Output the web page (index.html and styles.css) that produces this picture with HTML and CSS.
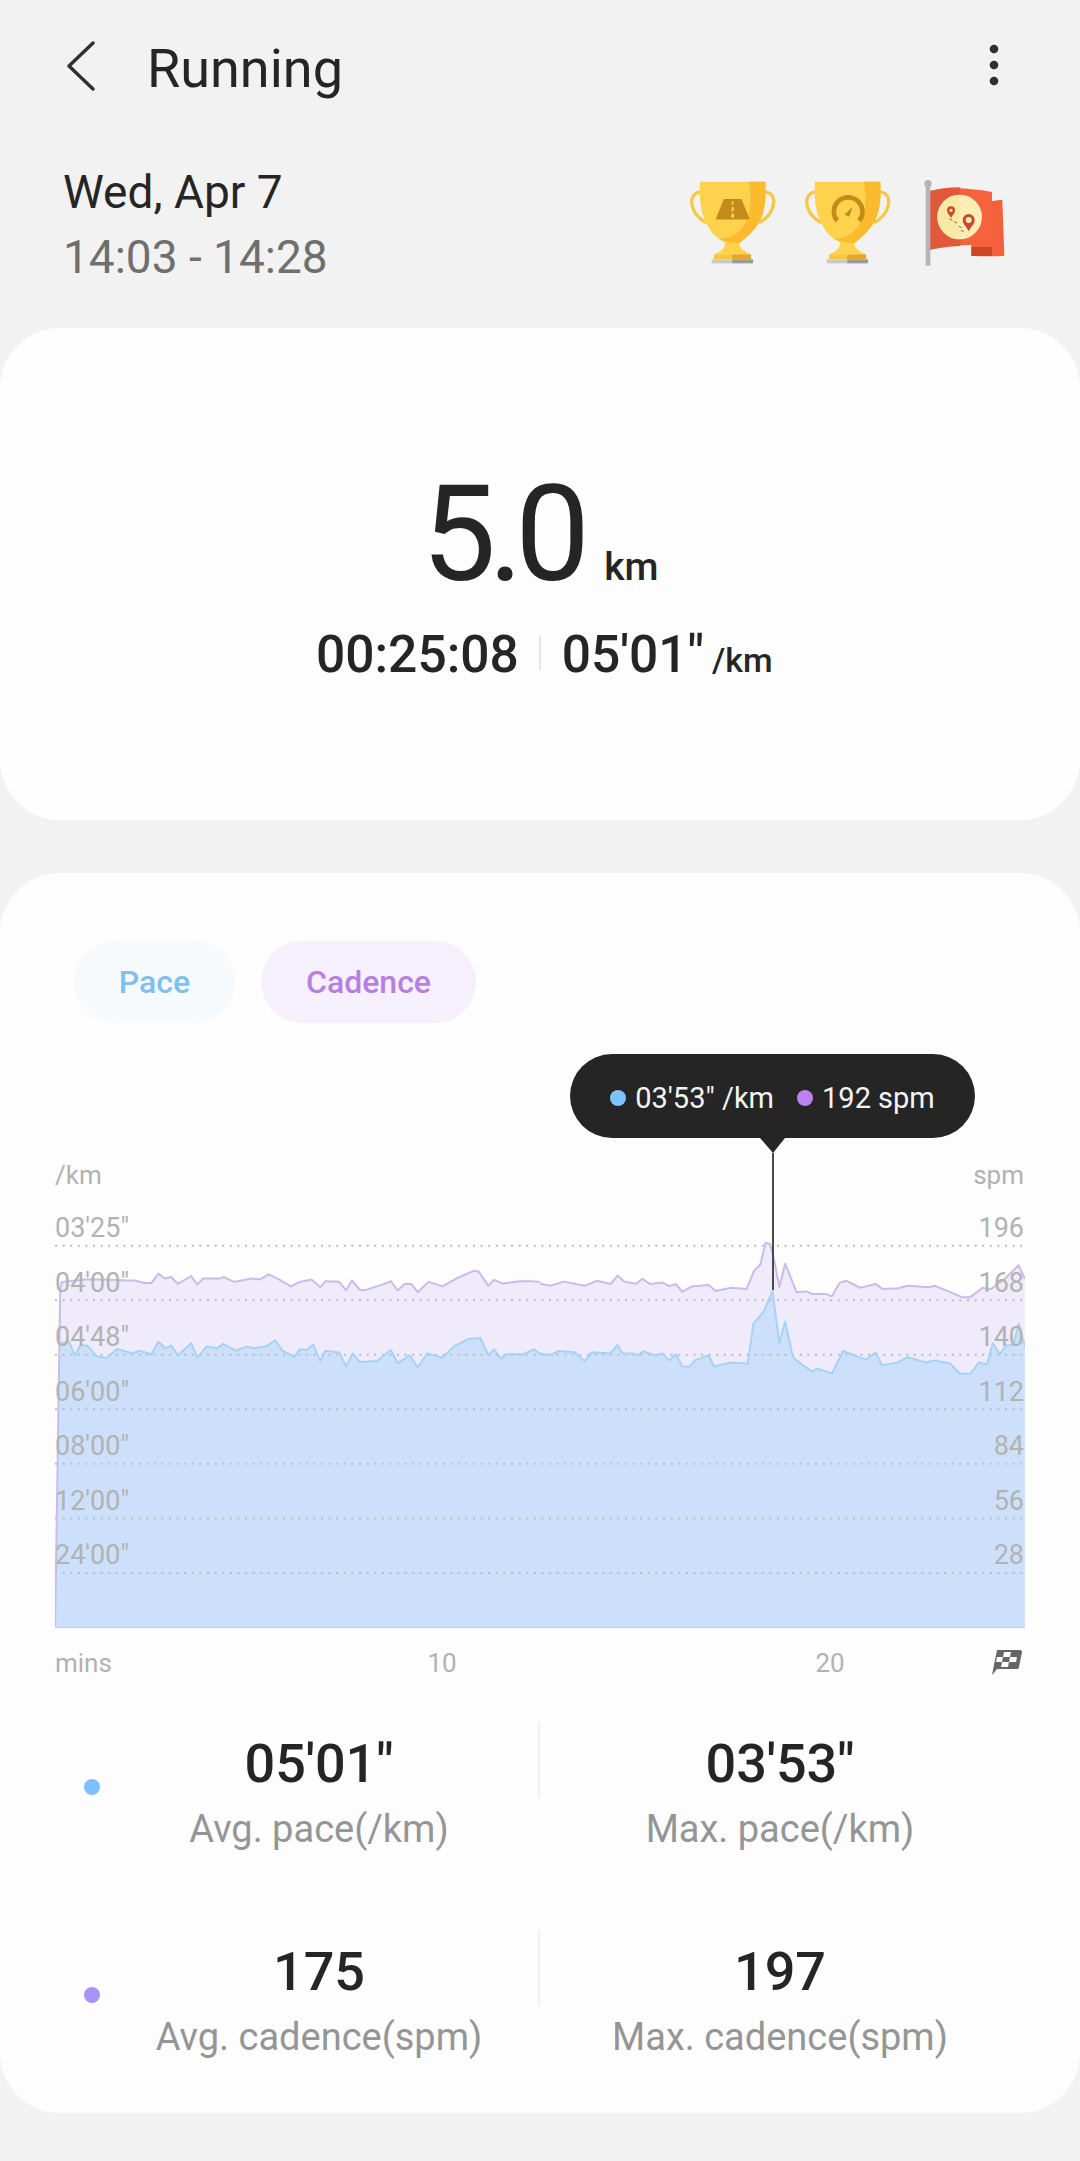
FILE: index.html
```html
<!DOCTYPE html>
<html lang="en">
<head>
<meta charset="utf-8">
<title>Running</title>
<link rel="stylesheet" href="styles.css">
</head>
<body>
<header class="appbar">
  <svg class="back" viewBox="0 0 30 50" aria-hidden="true"><path d="M27 2 3 25l24 23"/></svg>
  <h1 class="title">Running</h1>
  <svg class="menu" viewBox="0 0 12 48" aria-hidden="true"><circle cx="6" cy="8" r="4.3"/><circle cx="6" cy="24" r="4.3"/><circle cx="6" cy="40" r="4.3"/></svg>
</header>

<section class="summary">
  <div class="when">
    <div class="date">Wed, Apr 7</div>
    <div class="time">14:03 - 14:28</div>
  </div>
  <div class="badges">
    <svg class="trophy" viewBox="140 55 275 265" aria-hidden="true">
      <path class="t-handle" d="M190 97C160 95 148 115 155 140c5 22 20 38 42 50M365 97c30-2 40 18 33 43-5 22-20 38-42 50"/>
      <path class="t-cup" d="M178 66H375C378 130 372 170 345 205 330 225 310 240 296 250 296 268 315 278 332 285H220C238 278 254 268 254 250 235 240 215 225 205 205 182 170 175 130 178 66Z"/>
      <path class="t-shade" d="M325 66H375C378 130 372 170 345 205 330 225 310 240 296 252 280 250 255 248 235 238 280 240 320 205 328 150 332 115 330 90 325 66Z"/>
      <path class="t-base" d="M220 285h55v15h-55z"/><path class="t-base-d" d="M275 285h57v15h-57z"/>
      <path class="t-foot" d="M213 300h62v12h-62z"/><path class="t-foot-d" d="M275 300h63v12h-63z"/>
      <path class="t-mark" d="M250 118h53l25 62H225z"/>
      <path class="t-dash" d="M274 124h5v12h-5zM273 142h7v13h-7zM272 162h9v13h-9z"/>
    </svg>
    <svg class="trophy" viewBox="485 55 275 265" aria-hidden="true">
      <path class="t-handle" d="M535 97c-30-2-42 18-35 43 5 22 20 38 42 50M710 97c30-2 40 18 33 43-5 22-20 38-42 50"/>
      <path class="t-cup" d="M523 66H720C723 130 717 170 690 205 675 225 655 240 641 250 641 268 660 278 677 285H565C583 278 599 268 599 250 580 240 560 225 550 205 527 170 520 130 523 66Z"/>
      <path class="t-shade" d="M670 66H720C723 130 717 170 690 205 675 225 655 240 641 252 625 250 600 248 580 238 625 240 665 205 673 150 677 115 675 90 670 66Z"/>
      <path class="t-base" d="M565 285h55v15h-55z"/><path class="t-base-d" d="M620 285h57v15h-57z"/>
      <path class="t-foot" d="M558 300h62v12h-62z"/><path class="t-foot-d" d="M620 300h63v12h-63z"/>
      <path class="t-gauge" d="M590 184a43 43 0 1 1 66 0"/>
      <path class="t-needle" d="M612 166l24-24-10 30z"/>
    </svg>
    <svg class="flag" viewBox="845 55 255 270" aria-hidden="true">
      <path class="f-back" d="M1050 125l36-5 6 168c-30 3-70 2-99 0v-30z"/>
      <path class="f-fold" d="M993 262l62 0v26c-20 2-42 1-62 0z"/>
      <path class="f-main" d="M858 97c40-12 100-18 197 0v165c-70-12-130-6-197 10z"/>
      <path class="f-left" d="M858 97c30-9 65-14 102-14v176c-35 1-68 6-102 13z"/>
      <circle class="f-disc" cx="958" cy="172" r="67"/>
      <path class="f-disc-l" d="M958 105a67 67 0 0 0 0 134z"/>
      <path class="f-pin" d="M932 140a12 12 0 0 1 12 12c0 9-8 14-12 24-4-10-12-15-12-24a12 12 0 0 1 12-12zm0 7a5 5 0 1 0 0 10 5 5 0 0 0 0-10zM985 163a18 18 0 0 1 18 18c0 13-12 20-18 34-6-14-18-21-18-34a18 18 0 0 1 18-18zm0 9a9 9 0 1 0 0 18 9 9 0 0 0 0-18z"/>
      <path class="f-trail" d="M928 178l8 4M942 186l8 4M956 200l8 4M962 212l8 4"/>
      <path class="f-pole" d="M856 80h14v238h-14z"/>
      <circle class="f-pole" cx="863" cy="72" r="11"/>
    </svg>
  </div>
</section>

<section class="card card-total">
  <!-- The reference draws 5.0 in a seven-segment face; no such font is installed, so it stays real text in Roboto. -->
  <div class="distance"><span class="distance-value">5.0</span><span class="distance-unit">km</span></div>
  <div class="totals">
    <span class="totals-value">00:25:08</span>
    <span class="totals-rule"></span>
    <span class="totals-value">05'01"</span>
    <span class="totals-unit">/km</span>
  </div>
</section>

<section class="card card-chart">
  <div class="chips">
    <span class="chip chip-pace">Pace</span>
    <span class="chip chip-cadence">Cadence</span>
  </div>

  <div class="chart">
    <div class="tooltip">
      <i class="dot dot-pace-tip"></i><span class="tip-text">03'53" /km</span>
      <i class="dot dot-cadence-tip"></i><span class="tip-text">192 spm</span>
    </div>
    <div class="units"><span>/km</span><span>spm</span></div>
    <div class="plot">
      <svg class="plot-svg" viewBox="55 1191 970 437" aria-hidden="true">
        <g transform="translate(0 1140) scale(.34435)">
          <polygon class="area-c" points="160,1417 175,430 180,412 250,405 300,405 370,408 390,408 420,415 440,415 460,388 478,402 497,398 517,418 555,395 573,420 590,402 640,402 650,398 680,412 730,402 755,405 780,390 810,405 845,425 870,412 905,405 930,428 945,410 985,412 1005,437 1022,408 1045,435 1060,436 1110,420 1135,410 1155,437 1175,418 1195,418 1213,442 1245,412 1285,425 1330,400 1375,380 1390,382 1418,423 1435,406 1460,417 1510,410 1545,410 1572,412 1572,1417"/>
        </g>
        <g transform="translate(540 1040) scale(.34435 .40816)">
          <polygon class="area-c" points="0,597 30,602 70,592 100,597 130,602 165,590 205,598 225,577 245,592 280,597 297,585 320,598 355,594 375,603 395,598 413,617 440,604 490,600 510,615 555,607 600,610 622,565 640,550 655,497 668,500 680,540 695,605 712,548 745,618 775,616 790,622 830,622 848,628 870,595 890,590 930,607 975,598 995,610 1040,608 1068,602 1130,606 1145,602 1190,617 1225,630 1250,630 1285,607 1310,610 1350,585 1390,552 1408,585 1408,1441 0,1441"/>
        </g>
        <g transform="translate(0 1140) scale(.34435)">
          <polygon class="area-p" points="162,1417 175,590 200,585 217,625 235,595 255,598 280,628 310,633 340,607 385,620 405,612 440,622 460,585 480,605 497,597 517,625 555,590 573,632 600,600 630,605 648,592 685,612 715,600 740,605 775,598 800,582 820,612 855,630 870,608 890,610 910,595 930,642 945,612 985,617 1005,657 1025,620 1045,645 1095,642 1135,610 1155,648 1190,625 1213,660 1240,620 1285,632 1320,598 1360,578 1395,575 1418,625 1435,608 1455,635 1470,622 1520,622 1550,608 1572,620 1572,1417"/>
        </g>
        <g transform="translate(540 1040) scale(.34435 .40816)">
          <polygon class="area-p" points="0,768 30,772 55,762 100,765 130,787 150,765 205,768 225,747 240,768 270,768 285,772 300,763 335,773 355,768 375,785 395,770 413,800 435,800 450,785 490,772 505,800 555,790 603,793 620,695 650,665 675,615 695,742 712,690 735,778 760,795 790,812 805,805 848,817 880,762 945,783 975,766 993,797 1040,790 1068,777 1120,790 1145,785 1190,792 1220,818 1250,818 1275,790 1298,795 1315,743 1335,770 1355,748 1375,748 1390,695 1408,750 1408,1441 0,1441"/>
        </g>
        <path class="grid" d="M55 1245.7H1025M55 1300.2H1025M55 1354.7H1025M55 1409.3H1025M55 1463.8H1025M55 1518.4H1025M55 1572.9H1025"/>
        <g transform="translate(0 1140) scale(.34435)">
          <polyline class="line-c" points="160,1417 175,430 180,412 250,405 300,405 370,408 390,408 420,415 440,415 460,388 478,402 497,398 517,418 555,395 573,420 590,402 640,402 650,398 680,412 730,402 755,405 780,390 810,405 845,425 870,412 905,405 930,428 945,410 985,412 1005,437 1022,408 1045,435 1060,436 1110,420 1135,410 1155,437 1175,418 1195,418 1213,442 1245,412 1285,425 1330,400 1375,380 1390,382 1418,423 1435,406 1460,417 1510,410 1545,410 1568,412"/>
          <polyline class="line-p" points="175,590 200,585 217,625 235,595 255,598 280,628 310,633 340,607 385,620 405,612 440,622 460,585 480,605 497,597 517,625 555,590 573,632 600,600 630,605 648,592 685,612 715,600 740,605 775,598 800,582 820,612 855,630 870,608 890,610 910,595 930,642 945,612 985,617 1005,657 1025,620 1045,645 1095,642 1135,610 1155,648 1190,625 1213,660 1240,620 1285,632 1320,598 1360,578 1395,575 1418,625 1435,608 1455,635 1470,622 1520,622 1550,608 1568,620"/>
        </g>
        <g transform="translate(540 1040) scale(.34435 .40816)">
          <polyline class="line-c" points="0,597 30,602 70,592 100,597 130,602 165,590 205,598 225,577 245,592 280,597 297,585 320,598 355,594 375,603 395,598 413,617 440,604 490,600 510,615 555,607 600,610 622,565 640,550 655,497 668,500 680,540 695,605 712,548 745,618 775,616 790,622 830,622 848,628 870,595 890,590 930,607 975,598 995,610 1040,608 1068,602 1130,606 1145,602 1190,617 1225,630 1250,630 1285,607 1310,610 1350,585 1390,552 1408,585"/>
          <polyline class="line-p" points="0,768 30,772 55,762 100,765 130,787 150,765 205,768 225,747 240,768 270,768 285,772 300,763 335,773 355,768 375,785 395,770 413,800 435,800 450,785 490,772 505,800 555,790 603,793 620,695 650,665 675,615 695,742 712,690 735,778 760,795 790,812 805,805 848,817 880,762 945,783 975,766 993,797 1040,790 1068,777 1120,790 1145,785 1190,792 1220,818 1250,818 1275,790 1298,795 1315,743 1335,770 1355,748 1375,748 1390,695 1408,750"/>
        </g>
        <path class="baseline" d="M55 1627.5H1025"/>
      </svg>
      <div class="axis axis-left"><span>03'25"</span><span>04'00"</span><span>04'48"</span><span>06'00"</span><span>08'00"</span><span>12'00"</span><span>24'00"</span></div>
      <div class="axis axis-right"><span>196</span><span>168</span><span>140</span><span>112</span><span>84</span><span>56</span><span>28</span></div>
    </div>
    <div class="xaxis">
      <span>mins</span>
      <span class="tick tick-10">10</span>
      <span class="tick tick-20">20</span>
      <svg class="finish" viewBox="0 0 30 26" aria-hidden="true">
        <path class="finish-flag" d="M5 1h23a2 2 0 0 1 2 2l-3 15a2 2 0 0 1-2 2H5l-5 6z"/>
        <path class="finish-check" d="M12 3h7l-1 5h-7zM5 8h6l-1 5H4zM18 8h7l-1 5h-7zM10 13h7l-1 5H9z"/>
      </svg>
    </div>
  </div>

  <div class="stats">
    <div class="stat-row">
      <i class="dot stat-dot dot-pace"></i>
      <div class="stat"><div class="stat-value">05'01"</div><div class="stat-label">Avg. pace(/km)</div></div>
      <i class="stat-rule"></i>
      <div class="stat"><div class="stat-value">03'53"</div><div class="stat-label">Max. pace(/km)</div></div>
    </div>
    <div class="stat-row">
      <i class="dot stat-dot dot-cadence"></i>
      <div class="stat"><div class="stat-value">175</div><div class="stat-label">Avg. cadence(spm)</div></div>
      <i class="stat-rule"></i>
      <div class="stat"><div class="stat-value">197</div><div class="stat-label">Max. cadence(spm)</div></div>
    </div>
  </div>
</section>
</body>
</html>
```
FILE: styles.css
```css
* { box-sizing: border-box; }
html, body { margin: 0; padding: 0; }
body {
  width: 1080px;
  height: 2161px;
  overflow: hidden;
  background: #f2f2f2;
  color: #252525;
  font-family: Roboto, "Noto Sans", sans-serif;
}

/* App bar */
.appbar { display: flex; align-items: flex-start; height: 130px; padding: 39px 0 0 66px; }
.back { width: 30px; height: 50px; margin-top: 2px; fill: none; stroke: #303030; stroke-width: 3.4; stroke-linecap: round; stroke-linejoin: round; }
.title { margin: 0 0 0 51px; font-size: 54px; line-height: 60px; font-weight: 400; }
.menu { width: 12px; height: 48px; margin: 2px 80px 0 auto; fill: #303030; }

/* Date and badges */
.summary { display: flex; align-items: flex-start; height: 168px; margin-top: 30px; padding-left: 63px; }
.date, .time { font-size: 46px; line-height: 65px; }
.time { color: #6f6f6f; }
.badges { display: flex; gap: 23px; margin: 18px 73px 0 auto; }
.trophy { width: 92px; height: 88px; }
.flag { width: 85px; height: 90px; margin-left: 5px; }

.t-handle { fill: none; stroke: #f6c84a; stroke-width: 10; }
.t-cup { fill: #ffd24e; }
.t-shade { fill: #fcbb2e; }
.t-base { fill: #fbc63e; }
.t-base-d { fill: #eaa32e; }
.t-foot { fill: #c9c9c9; }
.t-foot-d { fill: #9a9a9a; }
.t-mark { fill: #c48a1a; }
.t-dash { fill: #f6cb52; }
.t-gauge { fill: none; stroke: #c48a1a; stroke-width: 14; }
.t-needle { fill: #c48a1a; }
.f-back { fill: #f4603b; }
.f-fold { fill: #cf4526; }
.f-main { fill: #f4633d; }
.f-left { fill: #e2583a; }
.f-disc { fill: #fdeeb6; }
.f-disc-l { fill: #fbe7a8; }
.f-pin { fill: #c9482a; fill-rule: evenodd; }
.f-trail { stroke: #9a5a30; stroke-width: 3; fill: none; }
.f-pole { fill: #b5b5b5; }

/* Cards */
.card { background: #fdfdfd; border-radius: 60px; }
.card-total { height: 492px; padding-top: 139px; }
.card-chart { height: 1240px; margin-top: 53px; padding-top: 68px; }

.distance { display: flex; justify-content: center; align-items: baseline; }
.distance-value { font-size: 133px; line-height: 135px; letter-spacing: -8px; }
.distance-unit { margin-left: 22px; font-size: 39px; font-weight: 500; }
.totals { display: flex; align-items: baseline; margin-top: 23px; padding-left: 316px; font-weight: 500; }
.totals-value { font-size: 51.5px; line-height: 60px; }
.totals-rule { align-self: flex-end; width: 2px; height: 34px; margin: 0 21px 15px 20px; background: #e6e6e6; }
.totals-unit { margin-left: 8px; font-size: 34px; }

/* Chips */
.chips { display: flex; gap: 26px; padding-left: 74px; }
.chip { display: flex; align-items: center; justify-content: center; height: 82px; border-radius: 41px; font-size: 32px; font-weight: 500; }
.chip-pace { width: 161px; background: #f6fafd; color: #80c0ee; }
.chip-cadence { width: 215px; background: #f6f0fd; color: #b77fe0; }

/* Chart */
.chart { position: relative; width: 970px; margin: 137px 0 0 55px; color: #b2b2b2; font-size: 27px; }
.tooltip {
  position: absolute;
  top: -106px;
  left: 515px;
  z-index: 2;
  display: flex;
  align-items: center;
  justify-content: center;
  width: 405px;
  height: 84px;
  padding-top: 3px;
  border-radius: 42px;
  background: #252525;
  color: #f4f4f4;
}
.tooltip::before {
  content: "";
  position: absolute;
  top: 84px;
  left: 190px;
  width: 25px;
  height: 15px;
  background: #252525;
  clip-path: polygon(0 0, 100% 0, 52% 100%);
}
.tooltip::after {
  content: "";
  position: absolute;
  top: 99px;
  left: 202px;
  width: 2px;
  height: 137px;
  background: #4a4a4a;
}
.tip-text { font-size: 29px; line-height: 40px; }
.dot { display: block; width: 16px; height: 16px; border-radius: 50%; }
.dot-pace-tip { margin-right: 9px; background: #7cc3ff; }
.dot-cadence-tip { margin: 0 9px 0 23px; background: #bd82f0; }

.units { display: flex; justify-content: space-between; height: 31px; padding-right: 1px; line-height: 31px; font-size: 26px; }
.plot { position: relative; height: 437px; }
.plot-svg { display: block; width: 970px; height: 437px; }
.area-c { fill: #f0ebfa; }
.area-p { fill: #cce0fb; }
.grid { fill: none; stroke: #bdbdbd; stroke-width: 2; stroke-dasharray: 2 5.6; }
.line-c { fill: none; stroke: #c8bce8; stroke-width: 2; vector-effect: non-scaling-stroke; stroke-linejoin: round; }
.line-p { fill: none; stroke: #a6d3f5; stroke-width: 2; vector-effect: non-scaling-stroke; stroke-linejoin: round; }
.baseline { fill: none; stroke: #c9d2e8; stroke-width: 2; }

.axis { position: absolute; top: 10px; display: flex; flex-direction: column; }
.axis span { height: 54.55px; line-height: 54.55px; }
.axis-left { left: 0; }
.axis-right { right: 1px; align-items: flex-end; }

.xaxis { position: relative; height: 32px; margin-top: 19px; line-height: 32px; font-size: 26px; }
.tick { position: absolute; top: 0; transform: translateX(-50%); }
.tick-10 { left: 387px; }
.tick-20 { left: 775px; }
.finish { position: absolute; top: 2px; left: 937px; width: 30px; height: 26px; }
.finish-flag { fill: #666; }
.finish-check { fill: #fdfdfd; }

/* Stats */
.stats { margin-top: 55px; }
.stat-row { display: grid; grid-template-columns: 84px 16px 438px 2px 480px; height: 208px; }
.stat-dot { grid-column: 2; margin-top: 45px; }
.dot-pace { background: #7cc0ff; }
.dot-cadence { background: #a993f8; }
.stat { text-align: center; }
.stat-value { font-size: 54px; line-height: 60px; font-weight: 500; }
.stat-label { margin-top: 5px; font-size: 38px; line-height: 60px; color: #959595; }
.stat-rule { width: 2px; height: 76px; margin-top: -12px; background: #f0f0f0; }
```
